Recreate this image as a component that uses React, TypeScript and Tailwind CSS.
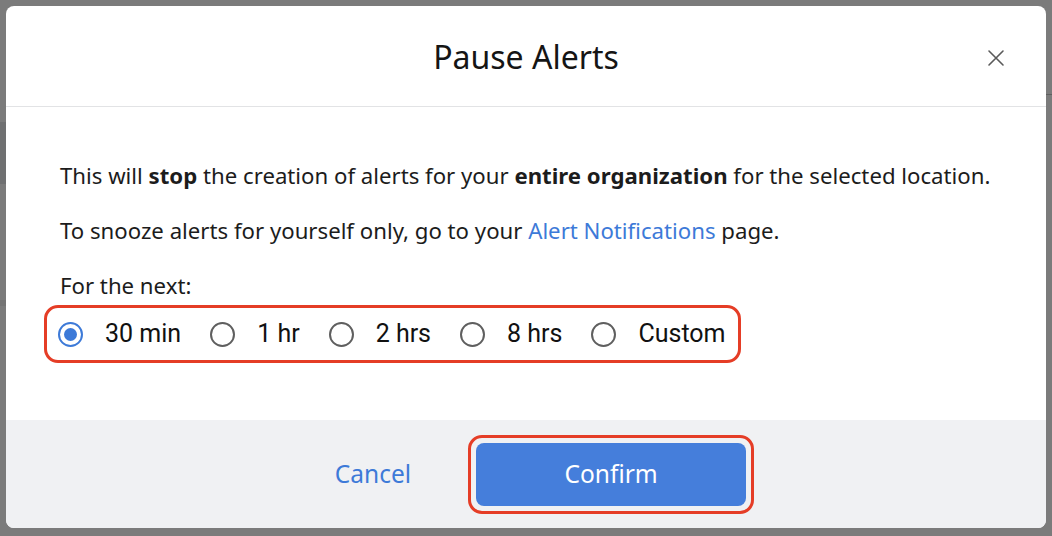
import React, { useState } from "react";

const options = ["30 min", "1 hr", "2 hrs", "8 hrs", "Custom"];

export default function App() {
  const [sel, setSel] = useState("30 min");
  return (
    <div
      className="relative w-[1052px] h-[536px] overflow-hidden bg-[#7b7b7b]"
      style={{ fontFamily: '"Noto Sans", "Open Sans", sans-serif' }}
    >
      {/* faint underlying page */}
      <div className="absolute left-0 top-[122px] w-[10px] h-[62px] bg-[#6f7071]" />
      <div className="absolute left-0 top-[300px] w-[10px] h-[6px] bg-[#747474]" />
      <div className="absolute right-0 top-[94px] w-[10px] h-[1px] bg-[#5f5f5f]" />
      <div className="absolute inset-0 p-[6px]">
        <div className="w-[1040px] h-[522px] bg-white rounded-[8px] flex flex-col overflow-hidden">
          {/* header */}
          <div className="relative h-[101px] border-b border-[#e2e3e5] flex items-center justify-center shrink-0">
            <h1 className="text-[32px] text-[#151515] mt-[2px]">Pause Alerts</h1>
            <button className="absolute right-[40px] top-[42px] w-[20px] h-[20px] flex items-center justify-center">
              <svg width="18" height="18" viewBox="0 0 18 18" fill="none" stroke="#5a5a5a" strokeWidth="1.6" strokeLinecap="round">
                <path d="M2 2L16 16M16 2L2 16" />
              </svg>
            </button>
          </div>
          {/* body */}
          <div className="flex-1 pl-[54px] pr-[20px] pt-[54px] text-[22.2px] text-[#1c1c1c]">
            <p className="leading-[30px] whitespace-nowrap">
              This will <b>stop</b> the creation of alerts for your <b>entire organization</b> for the selected location.
            </p>
            <p className="leading-[30px] mt-[25px]">
              To snooze alerts for yourself only, go to your{" "}
              <a className="text-[#3d7ad8]">Alert Notifications</a> page.
            </p>
            <p className="leading-[30px] mt-[25px]">For the next:</p>
            <div className="mt-[4px] -ml-[16px] w-[697px] h-[58px] border-[3px] border-[#e53d26] rounded-[14px] flex items-center pl-[11px] gap-[29px]">
              {options.map((o) => {
                const on = sel === o;
                return (
                  <label key={o} className="flex items-center gap-[22px] cursor-pointer" onClick={() => setSel(o)}>
                    <span
                      className={
                        on
                          ? "w-[25px] h-[25px] rounded-full border-[2px] border-[#3d7ad8] flex items-center justify-center"
                          : "w-[25px] h-[25px] rounded-full border-[2px] border-[#5f5f5f]"
                      }
                    >
                      {on && <span className="w-[13px] h-[13px] rounded-full bg-[#3d7ad8]" />}
                    </span>
                    <span className="text-[25px] leading-[30px] text-[#111]" style={{ fontFamily: "Roboto, sans-serif" }}>
                      {o}
                    </span>
                  </label>
                );
              })}
            </div>
          </div>
          {/* footer */}
          <div className="h-[108px] bg-[#f0f1f3] flex items-center justify-center gap-[57px] shrink-0 pl-[37px]">
            <button className="text-[24.5px] text-[#3d7ad8]">Cancel</button>
            <div className="rounded-[14px] border-[3px] border-[#e53d26] p-[5px]">
              <button className="w-[270px] h-[63px] rounded-[8px] bg-[#457edb] text-white text-[24.5px]">Confirm</button>
            </div>
          </div>
        </div>
      </div>
    </div>
  );
}
